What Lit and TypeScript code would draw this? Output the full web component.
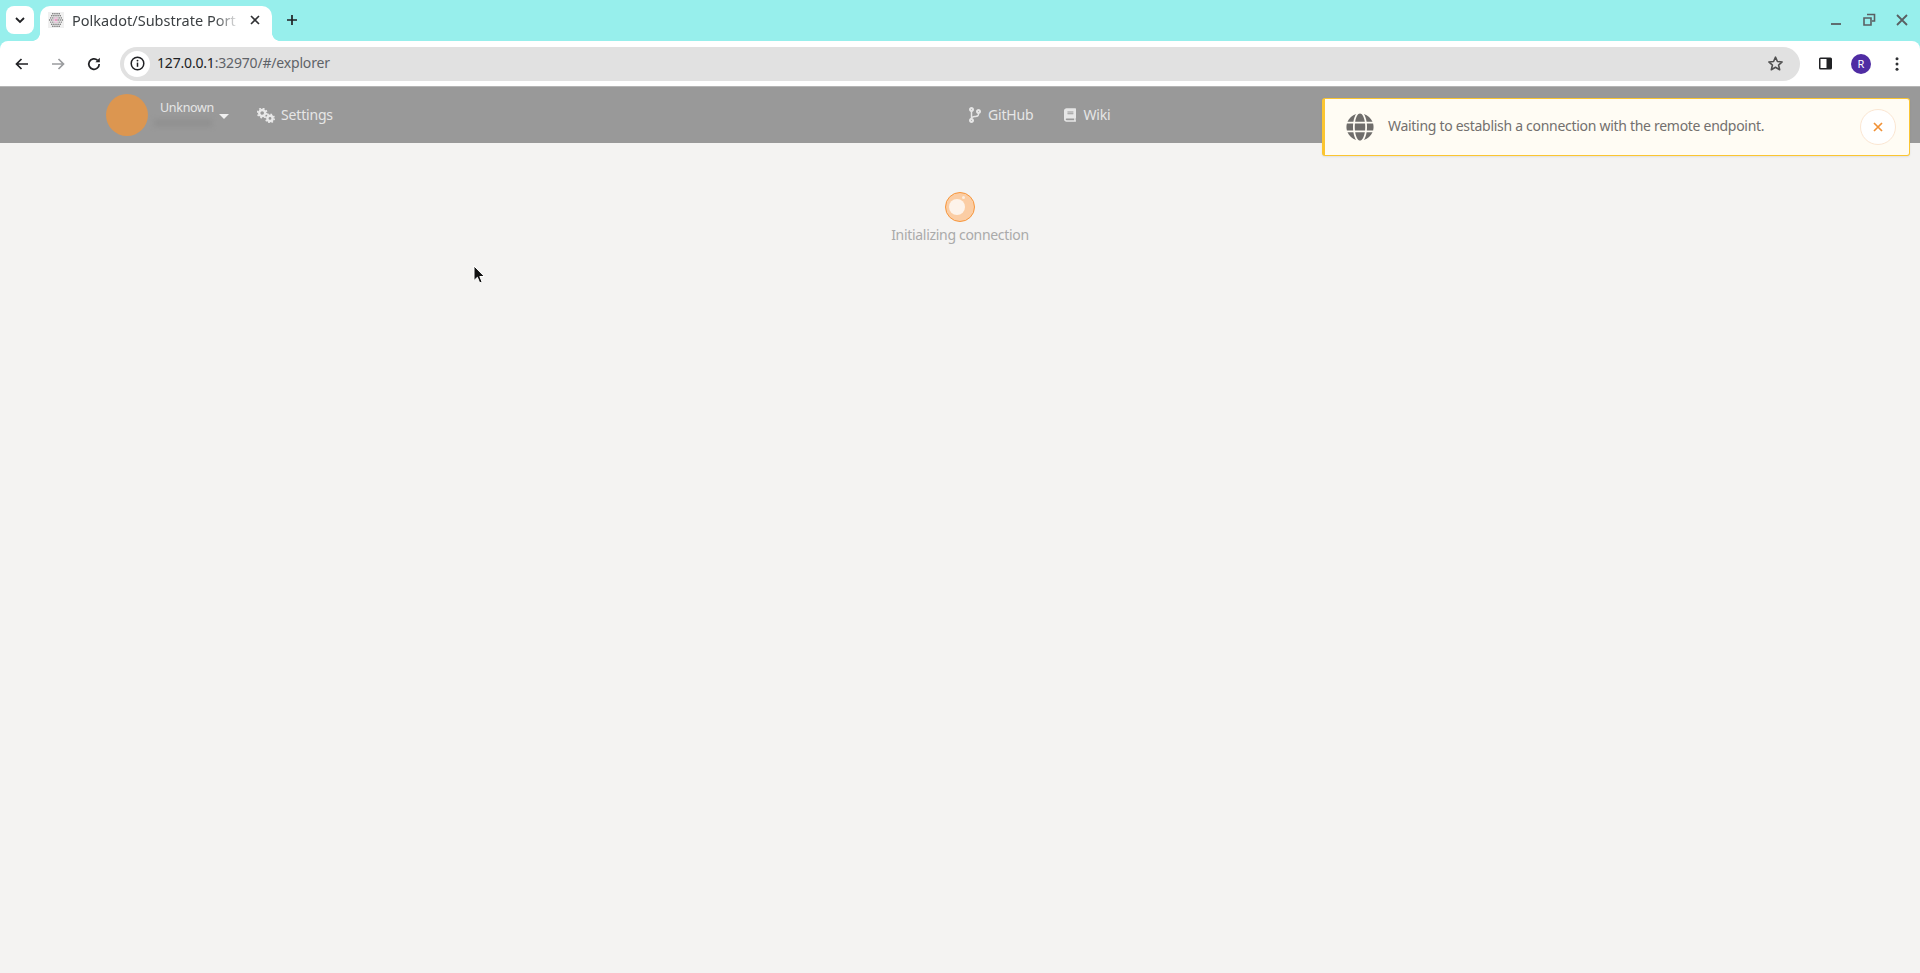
import { LitElement, html, css, svg } from "lit";
import { customElement } from "lit/decorators.js";

const GLOBE = "M336.5 160C322 70.7 287.8 8 248 8s-74 62.7-88.5 152h177zM152 256c0 22.2 1.2 43.5 3.3 64h185.3c2.1-20.5 3.3-41.8 3.3-64s-1.2-43.5-3.3-64H155.3c-2.1 20.5-3.3 41.8-3.3 64zm324.7-96c-28.6-67.9-86.5-120.4-158-141.6 24.4 33.8 41.2 84.7 50 141.6h108zM177.2 18.4C105.8 39.6 47.8 92.1 19.3 160h108c8.7-56.9 25.5-107.8 49.9-141.6zM487.4 192H372.7c2.1 21 3.3 42.5 3.3 64s-1.2 43-3.3 64h114.6c5.5-20.5 8.6-41.8 8.6-64s-3.1-43.5-8.5-64zM120 256c0-21.5 1.2-43 3.3-64H8.6C3.2 212.5 0 233.8 0 256s3.2 43.5 8.6 64h114.6c-2-21-3.2-42.5-3.2-64zm39.5 96c14.5 89.3 48.7 152 88.5 152s74-62.7 88.5-152h-177zm159.3 141.6c71.4-21.2 129.4-73.7 158-141.6h-108c-8.8 56.9-25.6 107.8-50 141.6zM19.3 352c28.6 67.9 86.5 120.4 158 141.6-24.4-33.8-41.2-84.7-50-141.6h-108z";
const BRANCH = "M384 144c0-44.2-35.8-80-80-80s-80 35.8-80 80c0 36.4 24.3 67.1 57.5 76.8-.6 16.1-4.2 28.5-11 36.9-15.4 19.2-49.3 22.4-85.2 25.7-28.2 2.6-57.4 5.4-81.3 16.9v-144c32.5-10.2 56-40.5 56-76.3 0-44.2-35.8-80-80-80S0 35.8 0 80c0 35.8 23.5 66.1 56 76.3v199.3C23.5 365.9 0 396.2 0 432c0 44.2 35.8 80 80 80s80-35.8 80-80c0-34-21.2-63.1-51.2-74.6 3.1-5.2 7.8-9.8 14.9-13.4 16.2-8.2 40.4-10.4 66.1-12.8 42.2-3.9 90-8.4 118.2-43.4 14-17.4 21.1-39.8 21.6-67.9 31.6-10.8 54.4-40.7 54.4-75.9zM80 64c8.8 0 16 7.2 16 16s-7.2 16-16 16-16-7.2-16-16 7.2-16 16-16zm0 384c-8.8 0-16-7.2-16-16s7.2-16 16-16 16 7.2 16 16-7.2 16-16 16zm224-320c8.8 0 16 7.2 16 16s-7.2 16-16 16-16-7.2-16-16 7.2-16 16-16z";
const BOOK = "M448 360V24c0-13.3-10.7-24-24-24H96C43 0 0 43 0 96v320c0 53 43 96 96 96h328c13.3 0 24-10.7 24-24v-16c0-7.5-3.5-14.3-8.9-18.7-4.2-15.4-4.2-59.3 0-74.7 5.4-4.3 8.9-11.1 8.9-18.6zM128 134c0-3.3 2.7-6 6-6h212c3.3 0 6 2.7 6 6v20c0 3.3-2.7 6-6 6H134c-3.3 0-6-2.7-6-6v-20zm0 64c0-3.3 2.7-6 6-6h212c3.3 0 6 2.7 6 6v20c0 3.3-2.7 6-6 6H134c-3.3 0-6-2.7-6-6v-20zm253.4 250H96c-17.7 0-32-14.3-32-32 0-17.6 14.4-32 32-32h285.4c-1.9 17.1-1.9 46.9 0 64z";

function favicon() {
  const dots = [];
  for (let r = -3; r <= 3; r++) {
    const n = 7 - Math.abs(r);
    for (let i = 0; i < n; i++) {
      const x = 8 + (i - (n - 1) / 2) * 2.1;
      const y = 8 + r * 2.1;
      const c = r === 0 && i === 3 ? "#e6007a" : Math.abs(r) <= 1 && i >= 2 && i <= 3 ? "#c77aa8" : "#5a5a5a";
      dots.push(svg`<circle cx=${x} cy=${y} r="0.7" fill=${c} />`);
    }
  }
  return html`<svg class="favicon" viewBox="0 0 16 16" width="16" height="16"><rect width="16" height="16" fill="#f0f0f0" />${dots}</svg>`;
}

@customElement("app-root")
export class AppRoot extends LitElement {
  static styles = css`
    :host {
      display: flex;
      flex-direction: column;
      height: 100vh;
      position: relative;
      overflow: hidden;
      font-family: "Noto Sans", sans-serif;
      background: #f4f3f2;
    }
    svg { display: block; flex: none; }

    /* browser tab strip */
    .strip {
      height: 41px;
      flex: none;
      background: #97efec;
      display: flex;
      align-items: flex-start;
      padding: 6px 0 0 6px;
      box-sizing: border-box;
    }
    .tab-search {
      width: 28px;
      height: 28px;
      background: #fff;
      border-radius: 8px;
      display: flex;
      align-items: center;
      justify-content: center;
    }
    .tab {
      margin-left: 6px;
      width: 232px;
      height: 35px;
      background: #fff;
      border-radius: 10px 10px 0 0;
      display: flex;
      align-items: center;
      padding: 0 0 8px 8px;
      box-sizing: border-box;
      position: relative;
    }
    .tab::before, .tab::after {
      content: "";
      position: absolute;
      bottom: 0;
      width: 8px;
      height: 8px;
      background: radial-gradient(circle at 0 0, #97efec 7.6px, #fff 8.2px);
    }
    .tab::before { left: -8px; }
    .tab::after { right: -8px; background: radial-gradient(circle at 100% 0, #97efec 7.6px, #fff 8.2px); }
    .favicon { margin-right: 8px; }
    .tab-title {
      width: 168px;
      overflow: hidden;
      white-space: nowrap;
      font-size: 14.5px;
      line-height: 18px;
      color: #3c4043;
      letter-spacing: 0.02px;
      -webkit-mask-image: linear-gradient(90deg, #000 85%, transparent 100%);
      mask-image: linear-gradient(90deg, #000 85%, transparent 100%);
    }
    .tab-close { margin-left: 9px; }
    .new-tab { margin: 7px 0 0 13px; }
    .window-btns {
      margin-left: auto;
      display: flex;
      align-items: center;
      gap: 17px;
      padding: 6px 10px 0 0;
    }

    /* browser toolbar */
    .strip-under { background: #97efec; flex: none; }
    .toolbar {
      height: 45px;
      background: #fff;
      border-radius: 8px 8px 0 0;
      display: flex;
      align-items: center;
      padding: 0 0 0 14px;
      box-sizing: border-box;
    }
    .tool { width: 16px; height: 16px; margin-right: 20px; }
    .omnibox {
      margin-left: -2px;
      width: 1680px;
      height: 34px;
      border-radius: 17px;
      background: #e1e1e1;
      display: flex;
      align-items: center;
      padding: 0 16px 0 4px;
      box-sizing: border-box;
    }
    .info {
      width: 26px;
      height: 26px;
      border-radius: 50%;
      background: #fff;
      display: flex;
      align-items: center;
      justify-content: center;
      margin-right: 7px;
    }
    .url { font-size: 14px; line-height: 18px; margin-top: -2px; color: #5f6368; letter-spacing: -0.18px; flex: 1; }
    .url b { font-weight: 400; color: #202124; }
    .right-tools { display: flex; align-items: center; margin-left: 18px; gap: 18px; }
    .profile {
      width: 20px;
      height: 20px;
      border-radius: 50%;
      background: #4f2ca3;
      color: #fff;
      font-size: 11px;
      display: flex;
      align-items: center;
      justify-content: center;
    }

    /* app nav */
    .nav {
      height: 57px;
      flex: none;
      background: #999;
      border-top: 1px solid #b5b5b5;
      box-sizing: border-box;
      display: flex;
      align-items: center;
      padding: 0 0 0 106px;
      color: #e6e6e6;
      font-size: 14px;
    }
    .nav-left { display: flex; align-items: center; width: 863px; flex: none; }
    .avatar { width: 42px; height: 42px; border-radius: 50%; background: #dc9650; }
    .acct { margin-left: 12px; width: 58px; }
    .acct-name { font-size: 12.5px; line-height: 16px; margin-top: -3px; letter-spacing: -0.3px; }
    .acct-addr {
      height: 8px;
      width: 58px;
      margin: 3px 0 0 -6px;
      background: #919191;
      filter: blur(2px);
    }
    .caret {
      width: 0; height: 0;
      border-left: 5px solid transparent;
      border-right: 5px solid transparent;
      border-top: 5px solid #f0f0f0;
      margin: 3px 0 0 1px;
    }
    .link { display: flex; align-items: center; gap: 7px; letter-spacing: -0.17px; line-height: 18px; }
    .link span { margin-top: -1px; }
    .settings { margin-left: 28px; gap: 6px; }
    .center { display: flex; gap: 31px; }

    /* page body */
    .main {
      flex: 1;
      display: flex;
      flex-direction: column;
      align-items: center;
      padding-top: 49px;
      color: #aaa;
      font-size: 14px;
      line-height: 18px;
      letter-spacing: -0.31px;
    }
    .spinner {
      width: 30px;
      height: 30px;
      border-radius: 50%;
      box-sizing: border-box;
      border: 1px solid #f7963c;
      background: #fbcda4;
      position: relative;
      margin-bottom: 4px;
    }
    .spinner::before {
      content: "";
      position: absolute;
      left: 3px; top: 6px;
      width: 16px; height: 16px;
      border-radius: 50%;
      background: #fdf3ea;
    }
    .spinner::after {
      content: "";
      position: absolute;
      left: 16px; top: 3px;
      width: 3px; height: 3px;
      border-radius: 50%;
      background: #fdeee0;
    }

    /* toast */
    .toast {
      position: absolute;
      left: 1322px;
      top: 98px;
      width: 588px;
      height: 58px;
      box-sizing: border-box;
      background: #fffcf4;
      border: 1px solid #fbc531;
      border-left-width: 3px;
      border-radius: 3px;
      display: flex;
      align-items: center;
      padding: 0 13px 0 21px;
      color: #73706e;
      font-size: 14px;
      line-height: 18px;
      letter-spacing: -0.29px;
      box-shadow: 0 1px 2px rgba(0,0,0,.08);
    }
    .toast-text { margin: -2px 0 0 14px; flex: 1; white-space: nowrap; }
    .close {
      width: 36px;
      height: 36px;
      border-radius: 50%;
      background: #fff;
      border: 1px solid #fbe6d2;
      box-sizing: border-box;
      display: flex;
      align-items: center;
      justify-content: center;
    }
    .cursor { position: absolute; left: 473px; top: 265px; }
  `;

  render() {
    return html`
      <div class="strip">
        <div class="tab-search">
          <svg width="12" height="12" viewBox="0 0 12 12"><path d="M2 4l4 4 4-4" fill="none" stroke="#202124" stroke-width="1.8"/></svg>
        </div>
        <div class="tab">
          ${favicon()}
          <div class="tab-title">Polkadot/Substrate Port</div>
          <svg class="tab-close" width="12" height="12" viewBox="0 0 12 12"><path d="M2 2l8 8M10 2l-8 8" stroke="#303134" stroke-width="1.6"/></svg>
        </div>
        <svg class="new-tab" width="14" height="14" viewBox="0 0 14 14"><path d="M7 2v10M2 7h10" stroke="#202124" stroke-width="1.7"/></svg>
        <div class="window-btns">
          <svg width="16" height="16" viewBox="0 0 16 16"><path d="M3 12h10" stroke="#5a5f62" stroke-width="1.8"/></svg>
          <svg width="16" height="16" viewBox="0 0 16 16"><path d="M6 2.5h7.5V9H11M3 6h7v7H3z" fill="none" stroke="#5a5f62" stroke-width="1.6"/></svg>
          <svg width="16" height="16" viewBox="0 0 16 16"><path d="M3 3l10 10M13 3L3 13" stroke="#5a5f62" stroke-width="1.8"/></svg>
        </div>
      </div>
      <div class="strip-under">
      <div class="toolbar">
        <svg class="tool" viewBox="0 0 16 16"><path d="M14 8H3M7.5 3L2.5 8l5 5" fill="none" stroke="#202124" stroke-width="1.7"/></svg>
        <svg class="tool" viewBox="0 0 16 16"><path d="M2 8h11M8.5 3l5 5-5 5" fill="none" stroke="#9a9c9e" stroke-width="1.7"/></svg>
        <svg class="tool" viewBox="0 0 16 16"><path d="M13.2 8a5.2 5.2 0 1 1-1.6-3.7" fill="none" stroke="#202124" stroke-width="1.7"/><path d="M13.8 1.8v4.4H9.4z" fill="#202124"/></svg>
        <div class="omnibox">
          <div class="info">
            <svg width="15" height="15" viewBox="0 0 15 15"><circle cx="7.5" cy="7.5" r="6.3" fill="none" stroke="#202124" stroke-width="1.5"/><path d="M7.5 6.6v4.2" stroke="#202124" stroke-width="1.5"/><circle cx="7.5" cy="4.6" r=".95" fill="#202124"/></svg>
          </div>
          <div class="url"><b>127.0.0.1</b>:32970/#/explorer</div>
          <svg width="17" height="17" viewBox="0 0 24 24"><path d="M12 3l2.7 6.2 6.7.6-5.1 4.4 1.6 6.6L12 17.3l-5.9 3.5 1.6-6.6-5.1-4.4 6.7-.6z" fill="none" stroke="#4f4f4f" stroke-width="2.2" stroke-linejoin="round"/></svg>
        </div>
        <div class="right-tools">
          <svg width="15" height="15" viewBox="0 0 15 15"><rect x="1" y="1.5" width="13" height="12" rx="1.5" fill="#202124"/><rect x="2.5" y="3" width="6" height="9" fill="#fff"/></svg>
          <div class="profile">R</div>
          <svg width="16" height="16" viewBox="0 0 16 16"><circle cx="8" cy="2.8" r="1.5" fill="#303134"/><circle cx="8" cy="8" r="1.5" fill="#303134"/><circle cx="8" cy="13.2" r="1.5" fill="#303134"/></svg>
        </div>
      </div>
      </div>

      <div class="nav">
        <div class="nav-left">
          <div class="avatar"></div>
          <div class="acct">
            <div class="acct-name">Unknown</div>
            <div class="acct-addr"></div>
          </div>
          <div class="caret"></div>
          <div class="link settings">
            <svg width="18" height="15" viewBox="0 0 18 15">
              <circle cx="5.2" cy="5" r="3" fill="none" stroke="#e8e8e8" stroke-width="2.4"/>
              <circle cx="5.2" cy="5" r="4.6" fill="none" stroke="#e8e8e8" stroke-width="1.6" stroke-dasharray="1.8 1.8"/>
              <circle cx="13" cy="10.4" r="2.6" fill="none" stroke="#e8e8e8" stroke-width="2.4"/>
              <circle cx="13" cy="10.4" r="4.2" fill="none" stroke="#e8e8e8" stroke-width="1.6" stroke-dasharray="1.6 1.7"/>
            </svg>
            <span>Settings</span>
          </div>
        </div>
        <div class="center">
          <div class="link">
            <svg width="12" height="16" viewBox="0 0 384 512"><path fill="#e6e6e6" d=${BRANCH}/></svg>
            <span>GitHub</span>
          </div>
          <div class="link">
            <svg width="12" height="14" viewBox="0 0 448 512"><path fill="#e6e6e6" d=${BOOK}/></svg>
            <span>Wiki</span>
          </div>
        </div>
      </div>

      <div class="main">
        <div class="spinner"></div>
        <div>Initializing connection</div>
      </div>

      <div class="toast">
        <svg width="28" height="28" viewBox="0 0 496 512"><path fill="#6f6d6b" d=${GLOBE}/></svg>
        <div class="toast-text">Waiting to establish a connection with the remote endpoint.</div>
        <div class="close">
          <svg width="12" height="12" viewBox="0 0 12 12"><path d="M2 2l8 8M10 2l-8 8" stroke="#f19135" stroke-width="1.7"/></svg>
        </div>
      </div>

      <svg class="cursor" width="12" height="20" viewBox="0 0 12 20">
        <path d="M1 1v14.5l3.4-3.2 2.3 5.6 2.4-1-2.3-5.4h4.6z" fill="#111" stroke="#fff" stroke-width="1"/>
      </svg>
    `;
  }
}
